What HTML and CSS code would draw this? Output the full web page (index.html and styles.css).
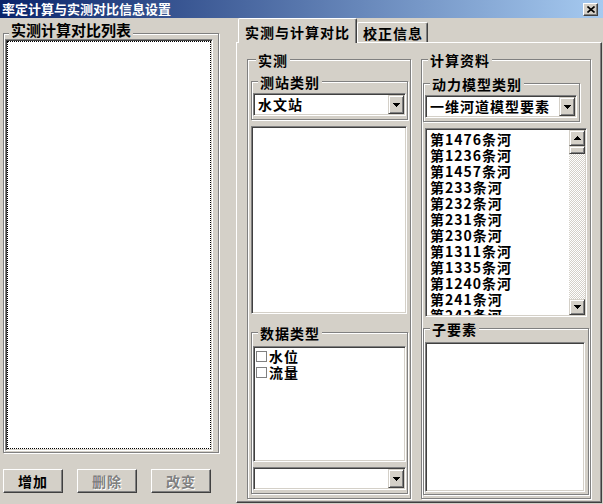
FILE: index.html
```html
<!DOCTYPE html>
<html lang="zh-CN">
<head>
  <meta charset="UTF-8">
  <title>率定计算与实测对比信息设置</title>
  <link rel="stylesheet" href="styles.css">
</head>
<body>

  <div class="titlebar">
    <span class="title">率定计算与实测对比信息设置</span>
    <span class="close-btn">
      <svg width="8" height="7" viewBox="0 0 8 7"><path d="M0.5 0.5l7 6M7.5 0.5l-7 6" stroke="#000" stroke-width="1.6"/></svg>
    </span>
  </div>

  <div class="main">
    <div class="left-col">
      <div class="group list-group">
        <div class="legend">实测计算对比列表</div>
        <div class="listbox compare-list"><div class="focus"></div></div>
      </div>
      <div class="btn-row">
        <button class="btn">增加</button>
        <button class="btn" disabled>删除</button>
        <button class="btn" disabled>改变</button>
      </div>
    </div>

    <div class="right-col">
      <div class="tabs">
        <div class="tab active">实测与计算对比</div>
        <div class="tab">校正信息</div>
      </div>

      <div class="tab-panel">
        <!-- 实测 -->
        <div class="group measured">
          <div class="legend">实测</div>
          <div class="group sub site-group">
            <div class="legend">测站类别</div>
            <div class="combo">
              <span class="combo-text">水文站</span>
              <span class="drop"><svg width="7" height="4" viewBox="0 0 7 4"><path d="M0 0h7v1h-1v1h-1v1h-1v1h-1v-1h-1v-1h-1v-1h-1z"/></svg></span>
            </div>
          </div>
          <div class="listbox station-list"></div>
          <div class="group sub type-group">
            <div class="legend">数据类型</div>
            <div class="listbox type-list">
              <div class="check-item"><span class="box"></span>水位</div>
              <div class="check-item"><span class="box"></span>流量</div>
            </div>
            <div class="combo">
              <span class="combo-text"></span>
              <span class="drop"><svg width="7" height="4" viewBox="0 0 7 4"><path d="M0 0h7v1h-1v1h-1v1h-1v1h-1v-1h-1v-1h-1v-1h-1z"/></svg></span>
            </div>
          </div>
        </div>

        <!-- 计算资料 -->
        <div class="group calc">
          <div class="legend">计算资料</div>
          <div class="group sub model-group">
            <div class="legend">动力模型类别</div>
            <div class="combo model-combo">
              <span class="combo-text">一维河道模型要素</span>
              <span class="drop"><svg width="7" height="4" viewBox="0 0 7 4"><path d="M0 0h7v1h-1v1h-1v1h-1v1h-1v-1h-1v-1h-1v-1h-1z"/></svg></span>
            </div>
          </div>
          <div class="listbox river-list">
            <div class="items">
              <div>第1476条河</div>
              <div>第1236条河</div>
              <div>第1457条河</div>
              <div>第233条河</div>
              <div>第232条河</div>
              <div>第231条河</div>
              <div>第230条河</div>
              <div>第1311条河</div>
              <div>第1335条河</div>
              <div>第1240条河</div>
              <div>第241条河</div>
              <div>第242条河</div>
            </div>
            <div class="scrollbar">
              <span class="sb-btn"><svg width="7" height="4" viewBox="0 0 7 4"><path d="M3 0h1v1h1v1h1v1h1v1h-7v-1h1v-1h1v-1h1z"/></svg></span>
              <span class="sb-thumb"></span>
              <span class="sb-track"></span>
              <span class="sb-btn"><svg width="7" height="4" viewBox="0 0 7 4"><path d="M0 0h7v1h-1v1h-1v1h-1v1h-1v-1h-1v-1h-1v-1h-1z"/></svg></span>
            </div>
          </div>
          <div class="group sub child-group">
            <div class="legend">子要素</div>
            <div class="listbox child-list"></div>
          </div>
        </div>
      </div>
    </div>
  </div>

</body>
</html>
```

FILE: styles.css
```css
* {
  box-sizing: border-box;
}

body {
  margin: 0;
  width: 603px;
  height: 504px;
  overflow: hidden;
  background: #d4d0c8;
  font-family: "Noto Sans CJK SC", sans-serif;
  font-size: 14px;
  font-weight: 700;
  letter-spacing: 1px;
  color: #000;
}

/* title bar */
.titlebar {
  height: 18px;
  display: flex;
  align-items: center;
  justify-content: space-between;
  padding: 0 5px 0 2px;
  background: linear-gradient(to right, #0a246a, #a6caf0);
  color: #fff;
  font-size: 13px;
  letter-spacing: 0;
  line-height: 16px;
}

.close-btn {
  width: 15px;
  height: 13px;
  display: flex;
  align-items: center;
  justify-content: center;
  background: #d4d0c8;
  border: 1px solid;
  border-color: #fff #404040 #404040 #fff;
  box-shadow: inset -1px -1px 0 #808080;
}

.main {
  display: flex;
  height: 486px;
}

/* shared win32 bits */
.group {
  border: 1px solid #808080;
  box-shadow: inset 1px 1px 0 #fff, 1px 1px 0 #fff;
}

.legend {
  width: fit-content;
  height: 16px;
  margin: -8px 0 0 5px;
  padding: 0 2px;
  line-height: 16px;
  background: #d4d0c8;
  white-space: nowrap;
}

.listbox {
  background: #fff;
  border: 1px solid;
  border-color: #808080 #fff #fff #808080;
  box-shadow: inset 1px 1px 0 #404040, inset -1px -1px 0 #d4d0c8;
  padding: 1px;
}

.combo {
  height: 23px;
  display: flex;
  background: #fff;
  border: 1px solid;
  border-color: #808080 #fff #fff #808080;
  box-shadow: inset 1px 1px 0 #404040, inset -1px -1px 0 #d4d0c8;
  padding: 1px;
}

.combo-text {
  flex: 1;
  padding-left: 3px;
  line-height: 19px;
}

.drop,
.sb-btn {
  width: 16px;
  display: flex;
  align-items: center;
  justify-content: center;
  background: #d4d0c8;
  border: 1px solid;
  border-color: #d4d0c8 #404040 #404040 #d4d0c8;
  box-shadow: inset 1px 1px 0 #fff, inset -1px -1px 0 #808080;
}

/* left column */
.left-col {
  width: 236px;
  flex: none;
  padding: 15px 0 0 3px;
}

.list-group {
  width: 216px;
  height: 420px;
  padding-left: 1px;
}

.list-group .legend {
  margin: -12px 0 1px 4px;
  font-size: 15px;
  letter-spacing: 0;
}

.compare-list {
  width: 208px;
  height: 412px;
}

.focus {
  height: 100%;
  border: 1px dotted #000;
}

.btn-row {
  display: flex;
  gap: 14px;
  margin-top: 16px;
}

.btn {
  width: 60px;
  height: 24px;
  padding: 0;
  font: inherit;
  letter-spacing: inherit;
  color: #000;
  background: #d4d0c8;
  border: 1px solid;
  border-color: #fff #404040 #404040 #fff;
  box-shadow: inset -1px -1px 0 #808080;
}

.btn:disabled {
  color: #808080;
  text-shadow: 1px 1px 0 #fff;
}

/* tabs */
.right-col {
  flex: 1;
  display: flex;
  flex-direction: column;
}

.tabs {
  display: flex;
  align-items: flex-end;
  height: 24px;
  padding-left: 2px;
}

.tab {
  height: 20px;
  padding: 2px 4px 0 5px;
  line-height: 16px;
  border: 1px solid;
  border-bottom: none;
  border-color: #fff #404040 transparent #fff;
  box-shadow: inset -1px 0 0 #808080;
  border-radius: 2px 2px 0 0;
}

.tab.active {
  height: 25px;
  margin-bottom: -1px;
  padding: 5px 6px 0 6px;
  position: relative;
  z-index: 1;
  background: #d4d0c8;
}

.tab-panel {
  width: 366px;
  height: 461px;
  display: flex;
  gap: 10px;
  padding: 16px 0 0 10px;
  border: 1px solid;
  border-color: #fff #404040 #404040 #fff;
  box-shadow: inset -1px -1px 0 #808080;
}

/* 实测 */
.measured {
  width: 164px;
  height: 440px;
  padding-left: 3px;
}

.sub {
  width: 157px;
  padding: 0 0 3px 1px;
}

.site-group {
  margin-top: 13px;
}

.sub .combo {
  margin-top: 3px;
  width: 153px;
}

.station-list {
  width: 156px;
  height: 188px;
  margin-top: 6px;
}

.type-group {
  margin-top: 18px;
}

.type-list {
  width: 153px;
  height: 116px;
  margin-top: 5px;
}

.type-group .combo {
  margin-top: 5px;
}

.check-item {
  display: flex;
  align-items: center;
  height: 16px;
  line-height: 16px;
  padding-left: 1px;
}

.box {
  width: 11px;
  height: 11px;
  margin-right: 2px;
  border: 1px solid #808080;
  background: #fff;
}

/* 计算资料 */
.calc {
  width: 170px;
  height: 440px;
  padding-left: 1px;
}

.model-group {
  margin-top: 15px;
}

.model-group .combo {
  width: 152px;
}

.river-list {
  width: 162px;
  height: 189px;
  margin: 6px 0 0 2px;
  display: flex;
  overflow: hidden;
}

.items {
  flex: 1;
  padding: 1px 0 0 3px;
  line-height: 16px;
  overflow: hidden;
  white-space: nowrap;
}

.scrollbar {
  width: 16px;
  display: flex;
  flex-direction: column;
}

.sb-btn {
  height: 16px;
  flex: none;
}

.sb-thumb {
  height: 8px;
  flex: none;
  background: #d4d0c8;
  border: 1px solid;
  border-color: #d4d0c8 #404040 #404040 #d4d0c8;
  box-shadow: inset 1px 1px 0 #fff, inset -1px -1px 0 #808080;
}

.sb-track {
  flex: 1;
  background: repeating-conic-gradient(#fff 0 25%, #d4d0c8 0 50%) 0 0 / 2px 2px;
}

.child-group {
  width: 166px;
  margin-top: 11px;
  padding: 0 0 2px 1px;
}

.child-list {
  width: 160px;
  height: 150px;
  margin-top: 5px;
}
```
